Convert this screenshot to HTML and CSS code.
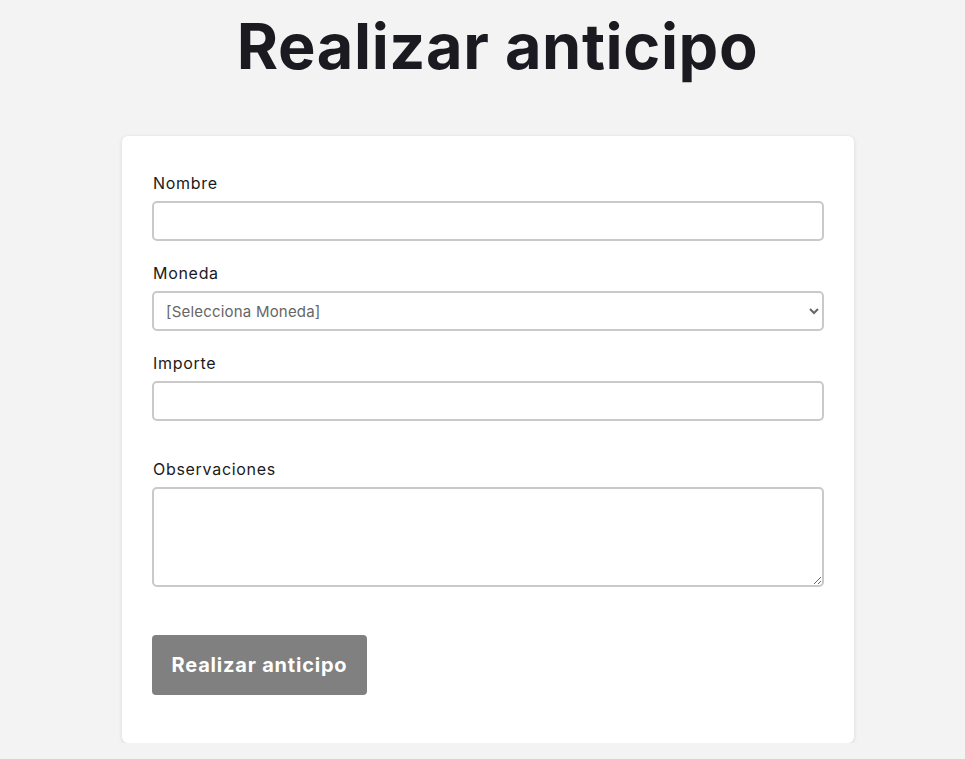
FILE: index.html
```html
<!DOCTYPE html>
<html lang="es">
<head>
  <meta charset="UTF-8" />
  <meta name="viewport" content="width=device-width, initial-scale=1.0" />
  <title>Realizar anticipo</title>
  <link rel="stylesheet" href="styles.css">
</head>
<body>
  <h1 class="title">Realizar anticipo</h1>

  <form class="card">
    <div class="field">
      <label for="nombre">Nombre</label>
      <input type="text" id="nombre" />
    </div>
    <div class="field">
      <label for="moneda">Moneda</label>
      <select id="moneda">
        <option>[Selecciona Moneda]</option>
      </select>
    </div>
    <div class="field">
      <label for="importe">Importe</label>
      <input type="text" id="importe" />
    </div>
    <div class="field field-obs">
      <label for="obs">Observaciones</label>
      <textarea id="obs"></textarea>
    </div>
    <button type="button" class="btn">Realizar anticipo</button>
  </form>
</body>
</html>
```

FILE: styles.css
```css
:root {
  --bg: #f3f3f3;
  --ink: #1b1a20;
  --border: #c9c9c9;
  --btn: #808080;
  --font: 'Inter', 'Open Sans', sans-serif;
}
* { margin:0; padding:0; box-sizing:border-box; }
body {
  background: var(--bg); color: var(--ink);
  font-family: var(--font);
}

/* TITLE */
.title {
  font-size: 63px; font-weight: 700; line-height: 1;
  text-align: center; padding: 15px 0 0 30px;
  letter-spacing: 0.6px; height: 136px;
}

/* CARD */
.card {
  width: 732px; margin: 0 0 0 122px;
  background: #fff; border-radius: 6px;
  box-shadow: 0 1px 4px rgba(0,0,0,0.12);
  padding: 37px 30px 48px;
}
.field { margin-bottom: 22px; }
.field-obs { margin-top: 38px; margin-bottom: 48px; }
.field label {
  display: block; font-size: 16px; line-height: 21px;
  margin-bottom: 7px; padding-left: 1px; letter-spacing: 0.7px;
}
.field input, .field select, .field textarea {
  display: block; width: 100%; height: 40px;
  border: 2px solid var(--border); border-radius: 5px;
  background: #fff; font-family: var(--font); font-size: 15px;
  padding: 0 12px; color: #666;
}
.field textarea { height: 100px; resize: vertical; padding: 8px 12px; }
.field select { color: #666; padding: 0 8px; letter-spacing: 0.2px; }

/* BUTTON */
.btn {
  display: block; width: 215px; height: 60px;
  background: var(--btn); color: #fff; border: none; border-radius: 4px;
  font-family: var(--font); font-size: 20px; font-weight: 700;
  letter-spacing: 0.8px;
}
```
